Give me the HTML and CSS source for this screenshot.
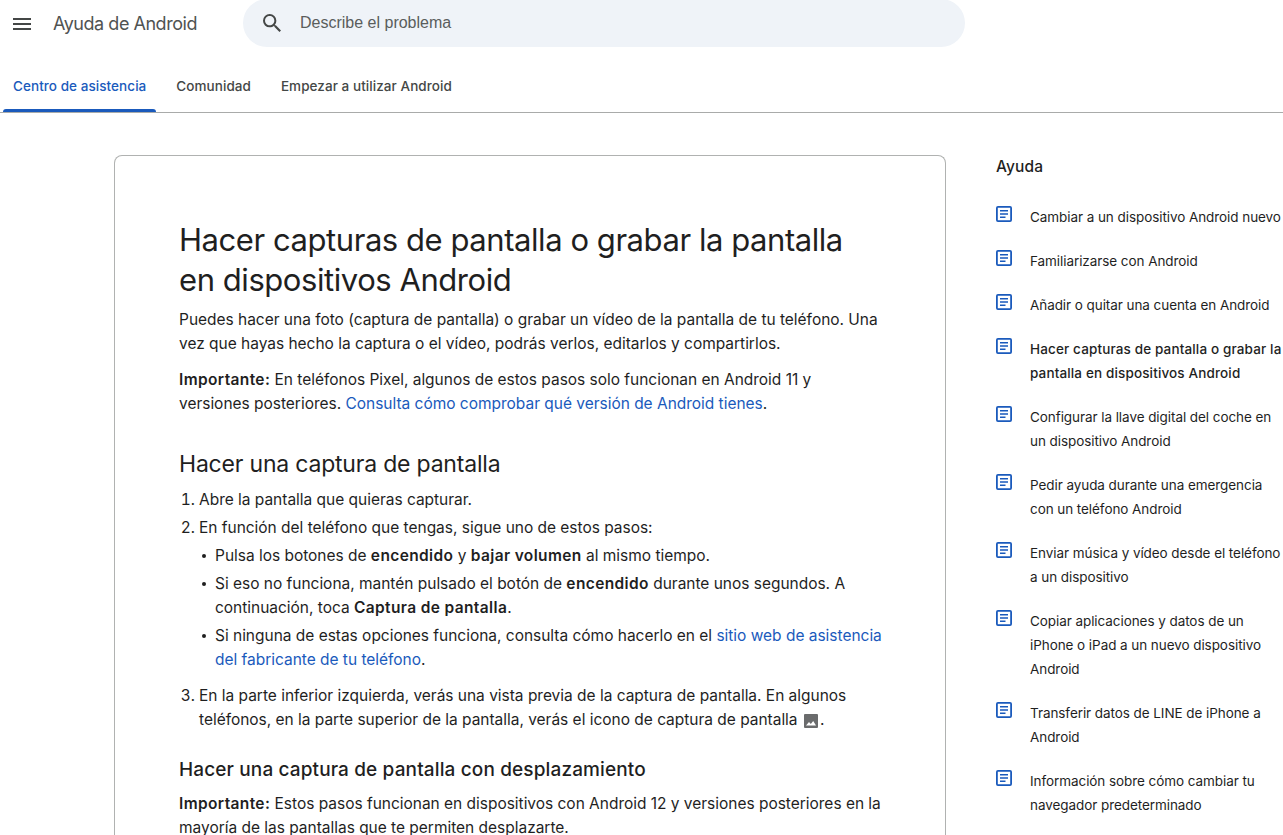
FILE: index.html
```html
<!doctype html>
<html lang="es">
  <head>
    <meta charset="utf-8">
    <meta name="viewport" content="width=device-width, initial-scale=1">
    <title>Hacer capturas de pantalla o grabar la pantalla en dispositivos Android - Ayuda de Android</title>
    <link rel="stylesheet" href="styles.css">
  </head>
  <body>
    <!-- icons used more than once -->
    <svg class="sprite" width="0" height="0">
      <symbol id="article" viewBox="0 0 16 16">
        <path fill-rule="evenodd" d="M2 0h12a2 2 0 0 1 2 2v12a2 2 0 0 1-2 2H2a2 2 0 0 1-2-2V2a2 2 0 0 1 2-2zM1.800 1.800v12.400h12.400V1.800zM4 4h8v1.600H4zM4 7.200h8v1.600H4zM4 10.400h5.500V12H4z"/>
      </symbol>
    </svg>

    <header class="header">
      <button class="menu" aria-label="Menú principal">
        <svg width="18" height="12" viewBox="0 0 18 12"><path d="M0 0h18v2H0zM0 5h18v2H0zM0 10h18v2H0z"/></svg>
      </button>
      <a class="brand" href="#">Ayuda de Android</a>
      <form class="search">
        <svg width="18" height="18" viewBox="3 3 17.500 17.500"><path d="M15.500 14h-.79l-.28-.27A6.470 6.470 0 0 0 16 9.500 6.500 6.500 0 1 0 9.500 16c1.610 0 3.090-.59 4.230-1.570l.27.28v.79l5 4.990L20.490 19l-4.990-5zm-6 0C7.010 14 5 11.990 5 9.500S7.010 5 9.500 5 14 7.010 14 9.500 11.990 14 9.500 14z"/></svg>
        <input type="text" placeholder="Describe el problema">
      </form>
    </header>

    <nav class="tabs">
      <a class="tab active" href="#">Centro de asistencia</a>
      <a class="tab" href="#">Comunidad</a>
      <a class="tab" href="#">Empezar a utilizar Android</a>
    </nav>

    <div class="page">
      <main class="article">
        <h1>Hacer capturas de pantalla o grabar la pantalla<br>en dispositivos Android</h1>
        <p>Puedes hacer una foto (captura de pantalla) o grabar un vídeo de la pantalla de tu teléfono. Una<br>vez que hayas hecho la captura o el vídeo, podrás verlos, editarlos y compartirlos.</p>
        <p><strong>Importante:</strong> En teléfonos Pixel, algunos de estos pasos solo funcionan en Android 11 y<br>versiones posteriores. <a href="#">Consulta cómo comprobar qué versión de Android tienes</a>.</p>

        <h2>Hacer una captura de pantalla</h2>
        <ol>
          <li>Abre la pantalla que quieras capturar.</li>
          <li>En función del teléfono que tengas, sigue uno de estos pasos:
            <ul>
              <li>Pulsa los botones de <strong>encendido</strong> y <strong>bajar volumen</strong> al mismo tiempo.</li>
              <li>Si eso no funciona, mantén pulsado el botón de <strong>encendido</strong> durante unos segundos. A<br>continuación, toca <strong>Captura de pantalla</strong>.</li>
              <li>Si ninguna de estas opciones funciona, consulta cómo hacerlo en el <a href="#">sitio web de asistencia<br>del fabricante de tu teléfono</a>.</li>
            </ul>
          </li>
          <li>En la parte inferior izquierda, verás una vista previa de la captura de pantalla. En algunos<br>teléfonos, en la parte superior de la pantalla, verás el icono de captura de pantalla <svg class="shot" width="14" height="14" viewBox="0 0 14 14"><path fill-rule="evenodd" d="M1 0h12a1 1 0 0 1 1 1v12a1 1 0 0 1-1 1H1a1 1 0 0 1-1-1V1a1 1 0 0 1 1-1zM2 11.500h10L9.200 7 6.800 10 5 8z"/></svg>.</li>
        </ol>

        <h3>Hacer una captura de pantalla con desplazamiento</h3>
        <p><strong>Importante:</strong> Estos pasos funcionan en dispositivos con Android 12 y versiones posteriores en la<br>mayoría de las pantallas que te permiten desplazarte.</p>
      </main>

      <aside class="sidebar">
        <h4>Ayuda</h4>
        <a href="#"><svg><use href="#article"/></svg><span>Cambiar a un dispositivo Android nuevo</span></a>
        <a href="#"><svg><use href="#article"/></svg><span>Familiarizarse con Android</span></a>
        <a href="#"><svg><use href="#article"/></svg><span>Añadir o quitar una cuenta en Android</span></a>
        <a class="current" href="#"><svg><use href="#article"/></svg><span>Hacer capturas de pantalla o grabar la<br>pantalla en dispositivos Android</span></a>
        <a href="#"><svg><use href="#article"/></svg><span>Configurar la llave digital del coche en<br>un dispositivo Android</span></a>
        <a href="#"><svg><use href="#article"/></svg><span>Pedir ayuda durante una emergencia<br>con un teléfono Android</span></a>
        <a href="#"><svg><use href="#article"/></svg><span>Enviar música y vídeo desde el teléfono<br>a un dispositivo</span></a>
        <a href="#"><svg><use href="#article"/></svg><span>Copiar aplicaciones y datos de un<br>iPhone o iPad a un nuevo dispositivo<br>Android</span></a>
        <a href="#"><svg><use href="#article"/></svg><span>Transferir datos de LINE de iPhone a<br>Android</span></a>
        <a href="#"><svg><use href="#article"/></svg><span>Información sobre cómo cambiar tu<br>navegador predeterminado</span></a>
      </aside>
    </div>
  </body>
</html>
```
FILE: styles.css
```css
*{
  box-sizing: border-box;
}
body{
  display: flex;
  flex-direction: column;
  margin: 0;
  height: 835px;
  overflow: hidden;
  background-color: #fff;
  color: #1f1f1f;
  font-family: Inter, sans-serif;
  font-size: 15.5px;
  line-height: 24px;
  letter-spacing: -0.02px;
  white-space: nowrap;
}
a{
  color: #1a5abc;
  text-decoration: none;
}
.sprite{
  position: absolute;
}
/* Top bar */
.header{
  display: flex;
  flex: none;
  align-items: center;
  height: 47px;
  padding-left: 13px;
}
.menu{
  display: flex;
  padding: 0;
  border: 0;
  background: none;
  fill: #444746;
}
.brand{
  width: 190px;
  margin-left: 22px;
  color: #505352;
  font-size: 18px;
  letter-spacing: -0.47px;
}
.search{
  display: flex;
  align-items: center;
  width: 722px;
  height: 48px;
  margin-top: -1px;
  padding-left: 20px;
  border-radius: 24px;
  background-color: #eff3f8;
  fill: #444746;
}
.search input{
  flex: 1;
  margin-left: 17px;
  border: 0;
  background: none;
  font-family: "Liberation Sans", Arial, sans-serif;
  font-size: 16px;
}
.search input::placeholder{
  color: #5a5d5c;
}
/* Tabs */
.tabs{
  display: flex;
  flex: none;
  height: 66px;
  padding-left: 3px;
  border-bottom: 1px solid #a9abaa;
}
.tab{
  padding: 27px 10px 0;
  margin-right: 10px;
  color: #444746;
  font-size: 13.5px;
  font-weight: 500;
  letter-spacing: 0.06px;
}
.tab.active{
  position: relative;
  color: #1a5abc;
}
.tab.active::after{
  content: "";
  position: absolute;
  left: 0;
  right: 0;
  bottom: 0;
  height: 3px;
  border-radius: 3px 3px 0 0;
  background-color: #1a5abc;
}
/* Article and side list */
.page{
  display: flex;
  flex: 1;
  min-height: 0;
  padding: 42px 0 0 114px;
}
.article{
  width: 832px;
  padding: 64px 64px 0;
  border: 1px solid #b0b2b1;
  border-bottom: 0;
  border-radius: 8px 8px 0 0;
}
h1, h2, h3, h4{
  margin: 0;
  font-weight: 400;
}
h1{
  margin-bottom: 8px;
  font-size: 31px;
  line-height: 40px;
  letter-spacing: -0.44px;
}
h2{
  margin: 32px 0 8px;
  font-size: 23px;
  line-height: 32px;
  letter-spacing: -0.2px;
}
h3{
  margin: 26px 0 10px;
  font-size: 19px;
  font-weight: 500;
  letter-spacing: 0.13px;
}
p{
  margin: 0 0 12px;
}
strong{
  font-weight: 600;
  letter-spacing: 0.37px;
}
ol, ul{
  margin: 0;
}
ol{
  padding-left: 20px;
}
ul{
  padding: 4px 0 8px 16px;
  list-style: none;
}
li{
  margin-bottom: 4px;
}
ul li:last-child{
  margin-bottom: 0;
}
/* small round bullet */
ul li::before{
  content: "";
  float: left;
  width: 4px;
  height: 4px;
  margin: 10px 0 0 -13px;
  border-radius: 50%;
  background-color: #1f1f1f;
}
.shot{
  margin: 0 2px -3px 2px;
  fill: #6a6b6c;
}
.sidebar{
  display: flex;
  flex-direction: column;
  gap: 20px;
  margin-left: 50px;
  font-size: 13.5px;
  letter-spacing: -0.07px;
}
.sidebar h4{
  margin-bottom: 6px;
  font-size: 15.5px;
  font-weight: 500;
  letter-spacing: 0.1px;
}
.sidebar a{
  display: flex;
  gap: 18px;
  color: #1f1f1f;
}
.sidebar svg{
  width: 16px;
  height: 16px;
  margin-top: 1px;
  fill: #1a5abc;
}
.sidebar .current{
  font-weight: 500;
  letter-spacing: 0.14px;
}
```
